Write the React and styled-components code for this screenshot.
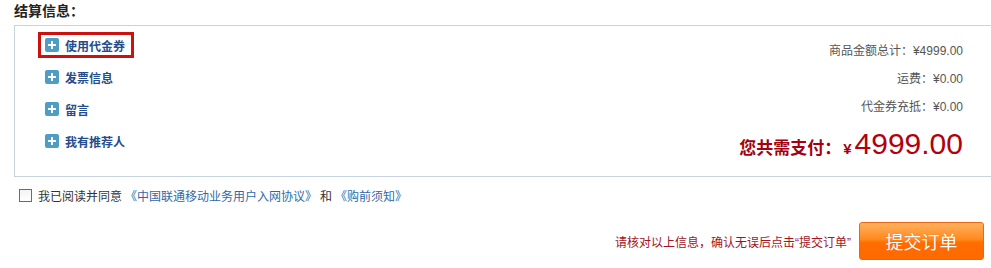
import React from "react";
import styled, { createGlobalStyle } from "styled-components";

const GlobalStyle = createGlobalStyle`
  body {
    margin: 0;
    background: #ffffff;
    font-family: "Liberation Sans", "Noto Sans CJK SC", sans-serif;
    color: #333333;
  }
`;

const options = [
  { label: "使用代金券", active: true },
  { label: "发票信息" },
  { label: "留言" },
  { label: "我有推荐人" }
];

const summary = [
  { label: "商品金额总计", value: "¥4999.00" },
  { label: "运费", value: "¥0.00" },
  { label: "代金券充抵", value: "¥0.00" }
];

export default function App() {
  return (
    <Page>
      <GlobalStyle />
      <Title>结算信息：</Title>
      <InfoBox>
        <OptionList>
          {options.map((o) => (
            <OptionRow key={o.label}>
              <Option active={o.active}>
                <PlusIcon />
                <OptionLabel>{o.label}</OptionLabel>
              </Option>
            </OptionRow>
          ))}
        </OptionList>
        <Summary>
          {summary.map((s) => (
            <SummaryLine key={s.label}>
              {s.label}：<Money>{s.value}</Money>
            </SummaryLine>
          ))}
          <TotalLine>
            <TotalLabel>您共需支付：</TotalLabel>
            <TotalYen>¥</TotalYen>
            <TotalAmount>4999.00</TotalAmount>
          </TotalLine>
        </Summary>
      </InfoBox>
      <AgreeRow>
        <CheckBox />
        <span>我已阅读并同意</span>
        <Link>《中国联通移动业务用户入网协议》</Link>
        <span>和</span>
        <Link>《购前须知》</Link>
      </AgreeRow>
      <SubmitRow>
        <Notice>请核对以上信息，确认无误后点击“提交订单”</Notice>
        <SubmitButton>提交订单</SubmitButton>
      </SubmitRow>
    </Page>
  );
}

function PlusIcon() {
  return (
    <IconBox>
      <svg width="14" height="14" viewBox="0 0 14 14">
        <rect x="0" y="0" width="14" height="14" rx="2" fill="#4f9cc4" />
        <rect x="3" y="6" width="8" height="2" fill="#ffffff" />
        <rect x="6" y="3" width="2" height="8" fill="#ffffff" />
      </svg>
    </IconBox>
  );
}

const Page = styled.div`
  width: 991px;
  height: 268px;
  overflow: hidden;
  padding-left: 14px;
  box-sizing: border-box;
`;

const Title = styled.div`
  height: 25px;
  line-height: 20px;
  font-size: 14px;
  font-weight: bold;
  color: #222222;
  font-family: "Noto Sans CJK SC", sans-serif;
`;

const InfoBox = styled.div`
  display: flex;
  justify-content: space-between;
  height: 150px;
  border: 1px solid #c6d4df;
  border-right: none;
`;

const OptionList = styled.div`
  display: flex;
  flex-direction: column;
  padding: 3px 0 0 23px;
`;

const OptionRow = styled.div`
  height: 32px;
  display: flex;
  align-items: center;
`;

const Option = styled.div`
  display: flex;
  align-items: center;
  gap: 6px;
  height: 20px;
  padding: 0 6px 0 4px;
  border: 3px solid ${(props) => (props.active ? "#cc1111" : "transparent")};
`;

const IconBox = styled.span`
  display: flex;
  width: 14px;
  height: 14px;
`;

const OptionLabel = styled.span`
  font-family: "Noto Sans CJK SC", sans-serif;
  font-size: 12px;
  font-weight: bold;
  color: #254c8c;
`;

const Summary = styled.div`
  display: flex;
  flex-direction: column;
  align-items: flex-end;
  padding: 10px 28px 0 0;
`;

const SummaryLine = styled.div`
  height: 28px;
  line-height: 28px;
  font-size: 12px;
  color: #555555;
  font-family: "Noto Sans CJK SC", sans-serif;
`;

const Money = styled.span`
  font-family: "Liberation Sans", sans-serif;
`;

const TotalLine = styled.div`
  display: flex;
  align-items: baseline;
  margin-top: 7px;
  height: 40px;
  color: #a30010;
`;

const TotalLabel = styled.span`
  font-family: "Noto Sans CJK SC", sans-serif;
  font-size: 17px;
  font-weight: bold;
`;

const TotalYen = styled.span`
  font-family: "Liberation Sans", sans-serif;
  font-size: 15px;
  font-weight: bold;
  margin: 0 3px 0 2px;
`;

const TotalAmount = styled.span`
  font-family: "Liberation Sans", sans-serif;
  font-size: 30px;
  color: #b3000c;
`;

const AgreeRow = styled.div`
  display: flex;
  align-items: center;
  gap: 3px;
  margin-top: 10px;
  padding-left: 5px;
  height: 16px;
  font-size: 12px;
  color: #333333;
  font-family: "Noto Sans CJK SC", sans-serif;
`;

const CheckBox = styled.span`
  width: 11px;
  height: 11px;
  margin-right: 3px;
  border: 1px solid #6b6b6b;
  background: linear-gradient(#f4f4f4, #ffffff);
`;

const Link = styled.span`
  color: #2f6aa8;
`;

const SubmitRow = styled.div`
  display: flex;
  justify-content: flex-end;
  align-items: center;
  gap: 8px;
  margin-top: 19px;
  padding-right: 7px;
`;

const Notice = styled.span`
  font-size: 12px;
  color: #a3141e;
  font-family: "Liberation Sans", "Noto Sans CJK SC", sans-serif;
`;

const SubmitButton = styled.button`
  width: 125px;
  height: 38px;
  border: 1px solid #e86a10;
  border-radius: 3px;
  background: linear-gradient(#ffb060 0%, #ff8a1e 45%, #ff6c00 55%, #ff6a00 100%);
  color: #ffffff;
  font-size: 18px;
  font-family: "Noto Sans CJK SC", sans-serif;
  text-shadow: 0 0 1px rgba(160, 60, 0, 0.4);
  cursor: pointer;
`;
